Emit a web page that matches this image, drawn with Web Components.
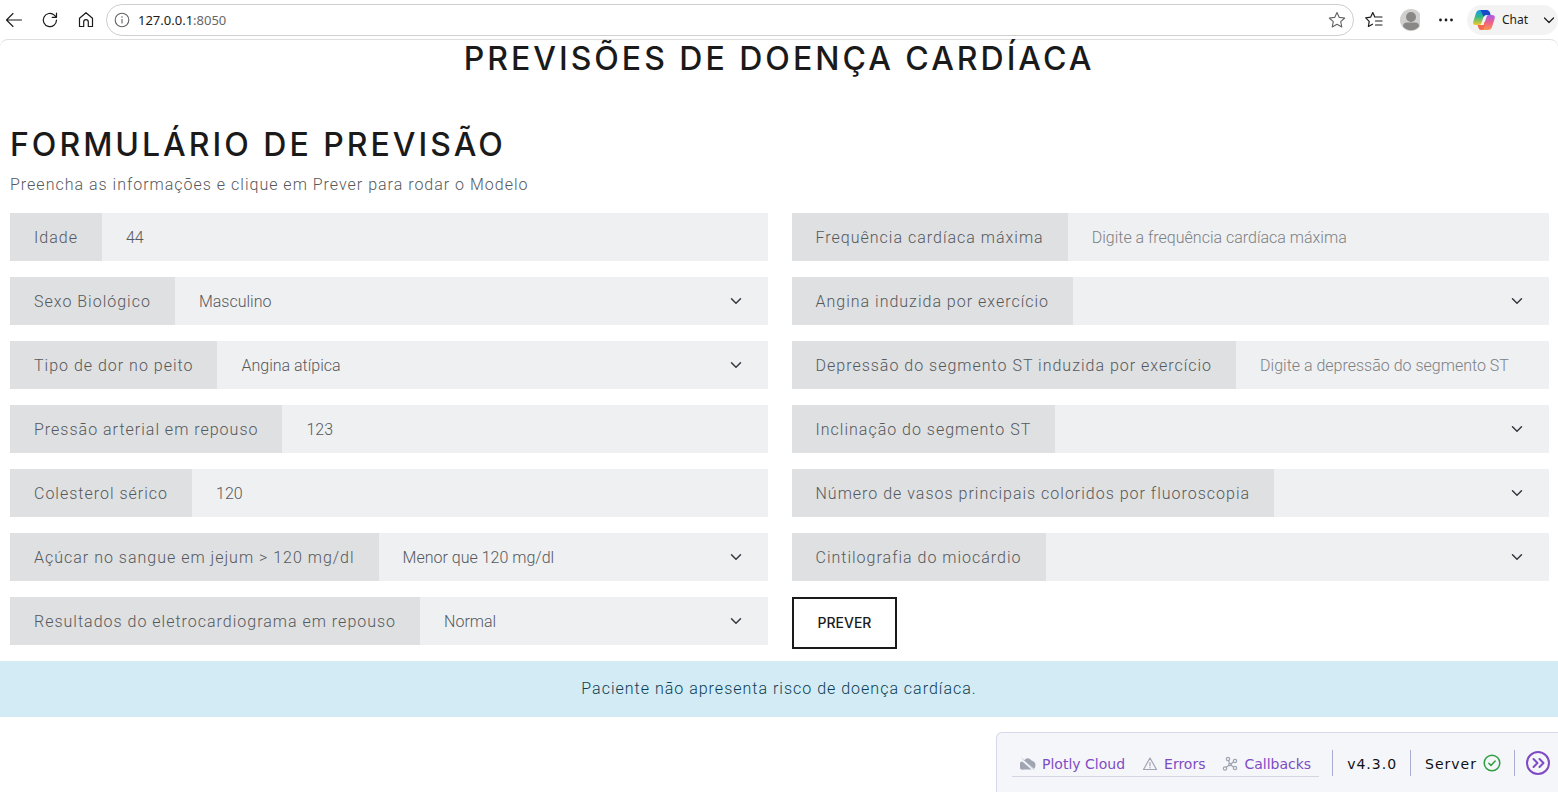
<!DOCTYPE html>
<html lang="pt-BR">
<head>
<meta charset="utf-8">
<meta name="viewport" content="width=device-width, initial-scale=1">
<title>Previsões de Doença Cardíaca</title>
<style>
  html, body { margin: 0; min-height: 100%; background: #fff; }
  body {
    --ink: #1a1a1a;
    --text: #55595c;
    --field: #eff0f2;
    --addon: #dfe0e2;
    --sans: Roboto, "Open Sans", sans-serif;
    --head: Inter, Lato, sans-serif;
    font: 300 16px/24px var(--sans);
    color: var(--text);
  }
</style>
</head>
<body>
<browser-bar host="127.0.0.1" port=":8050"></browser-bar>
<predict-page>
  <span slot="title">Previsões de Doença Cardíaca</span>
  <predict-form heading="Formulário de Previsão">
    <span slot="hint">Preencha as informações e clique em Prever para rodar o Modelo</span>
    <form-field slot="left" label="Idade" value="44"></form-field>
    <form-field slot="left" label="Sexo Biológico" options="Masculino|Feminino"></form-field>
    <form-field slot="left" label="Tipo de dor no peito" options="Angina atípica|Angina típica|Dor não anginosa|Assintomático"></form-field>
    <form-field slot="left" label="Pressão arterial em repouso" value="123"></form-field>
    <form-field slot="left" label="Colesterol sérico" value="120"></form-field>
    <form-field slot="left" label="Açúcar no sangue em jejum &gt; 120 mg/dl" options="Menor que 120 mg/dl|Maior que 120 mg/dl"></form-field>
    <form-field slot="left" label="Resultados do eletrocardiograma em repouso" options="Normal|Anormalidade"></form-field>
    <form-field slot="right" label="Frequência cardíaca máxima" placeholder="Digite a frequência cardíaca máxima"></form-field>
    <form-field slot="right" label="Angina induzida por exercício" options="|Não|Sim"></form-field>
    <form-field slot="right" label="Depressão do segmento ST induzida por exercício" placeholder="Digite a depressão do segmento ST"></form-field>
    <form-field slot="right" label="Inclinação do segmento ST" options="|1|2|3"></form-field>
    <form-field slot="right" label="Número de vasos principais coloridos por fluoroscopia" options="|0|1|2|3"></form-field>
    <form-field slot="right" label="Cintilografia do miocárdio" options="|Normal|Defeito fixo|Defeito reversível"></form-field>
    <outline-button slot="right">Prever</outline-button>
  </predict-form>
  <result-alert slot="result">Paciente não apresenta risco de doença cardíaca.</result-alert>
</predict-page>
<debug-menu></debug-menu>

<script>
function define(name, html, setup) {
  const tpl = document.createElement('template');
  tpl.innerHTML = html;
  customElements.define(name, class extends HTMLElement {
    constructor() {
      super();
      this.attachShadow({ mode: 'open' }).append(tpl.content.cloneNode(true));
    }
    connectedCallback() {
      if (setup && !this.ready) { this.ready = true; setup(this, this.shadowRoot); }
    }
  });
}

define('browser-bar', `
<style>
  :host { display: block; background: #fff; color: #1b1b1b; }
  .bar { display: flex; align-items: center; height: 39px; box-sizing: border-box; }
  button { border: 0; background: none; padding: 0; color: inherit; display: flex; align-items: center; justify-content: center; flex: none; }
  svg { display: block; fill: none; stroke: currentColor; stroke-linecap: round; stroke-linejoin: round; }
  svg.solid { stroke: none; fill: currentColor; }
  .nav { display: flex; gap: 16px; padding: 0 10px 0 4px; }
  .nav button { width: 20px; height: 20px; }
  .address { flex: 1; display: flex; align-items: center; gap: 8px; height: 32px; box-sizing: border-box; border: 1px solid #cfcfcf; border-radius: 16px; padding: 0 7px; min-width: 0; }
  .url { flex: 1; font: 400 13px/18px "Noto Sans", sans-serif; }
  .url span { color: #666; }
  .info, .star { color: #616161; }
  .tools { display: flex; align-items: center; gap: 16px; padding: 0 11px 0 10px; }
  .tools button { width: 20px; height: 22px; }
  .chat { height: 30px; border-radius: 15px; background: #f3f3f3; padding: 0 1px 0 5px; font: 400 12px/18px "Noto Sans", sans-serif; gap: 6px; }
  .chat span { margin-right: 7px; }
</style>
<div class="bar">
  <div class="nav">
    <button aria-label="Voltar"><svg width="20" height="20" stroke-width="1.1"><path d="M17.5 10H2.5M9 3.500L2.500 10L9 16.500"/></svg></button>
    <button aria-label="Atualizar"><svg width="20" height="20" stroke-width="1.2"><path d="M16.500 10A6.600 6.600 0 1 1 14.300 5.100L16.300 7.200M16.500 3V7.300H12.200"/></svg></button>
    <button aria-label="Início"><svg width="20" height="20" stroke-width="1.2"><path d="M3.500 8.200L10 2.700L16.500 8.200V16.500H12.300V12A2.300 2.300 0 0 0 7.700 12V16.500H3.500Z"/></svg></button>
  </div>
  <div class="address">
    <svg class="info" width="16" height="16" stroke-width="1.1"><circle cx="8" cy="8" r="6.800"/><path d="M8 7.500V11" /><path d="M8 5V5.100" stroke-width="1.500"/></svg>
    <div class="url"><b style="font-weight:400"></b><span></span></div>
    <svg class="star" width="18" height="18" stroke-width="1.1"><path d="M9 1.500L11.300 6.400L16.700 7L12.700 10.700L13.800 16L9 13.300L4.200 16L5.300 10.700L1.300 7L6.700 6.400Z"/></svg>
  </div>
  <div class="tools">
    <button aria-label="Favoritos"><svg width="20" height="20" stroke-width="1.200"><path d="M10.800 7L8.800 2.500L6.600 7.200L1.700 7.900L5.200 11.400L4.400 16.500L8.500 14.200M10.800 7H18M11.500 11H18M11.500 15H18"/></svg></button>
    <button aria-label="Perfil"><svg class="solid" width="22" height="22"><circle cx="11" cy="11" r="11" fill="#d2d0ce"/><circle cx="11" cy="8" r="5" fill="#8a8886"/><path d="M3 17.500Q3 13.500 7 13.500H15Q19 13.500 19 17.500Q16 21.200 11 21.200T3 17.500Z" fill="#8a8886"/></svg></button>
    <button aria-label="Mais"><svg class="solid" width="20" height="20"><circle cx="4.500" cy="10" r="1.400"/><circle cx="10" cy="10" r="1.400"/><circle cx="15.500" cy="10" r="1.400"/></svg></button>
  </div>
  <button class="chat">
    <svg class="solid" width="24" height="24" viewBox="0 0 24 24">
      <defs>
        <linearGradient id="a" x1="0" y1="0" x2="0" y2="1"><stop offset="0" stop-color="#1797e8"/><stop offset=".45" stop-color="#30b989"/><stop offset="1" stop-color="#f5ca26"/></linearGradient>
        <linearGradient id="b" x1="0" y1="0" x2="0" y2="1"><stop offset="0" stop-color="#a85cf0"/><stop offset=".5" stop-color="#ee608b"/><stop offset="1" stop-color="#fb944d"/></linearGradient>
      </defs>
      <path fill="url(#a)" d="M8 2H16L12.500 6L9.500 15Q9 17 7 17H3.500Q.500 17 1.300 13.500L4 5Q5 2 8 2Z"/>
      <path fill="#174bc8" d="M8.500 2H15Q17.200 2 18 4.500L18.600 7H14.500Q12.500 7 11.800 9Z"/>
      <path fill="url(#b)" d="M16.500 7H20Q23.500 7 22.700 10.500L20 19Q19 22 16 22H8L11.500 18L14.500 9Q15 7 16.500 7Z"/>
      <path fill="#f06a4f" d="M12.200 14.500L11.700 17L9.500 17H5.500L6.300 19.500Q7 22 9.200 22Q11.400 22 12 20L14 13Z"/>
    </svg>
    <span>Chat</span>
    <svg width="16" height="16" stroke-width="1.200"><path d="M3.500 6L8 10.500L12.500 6"/></svg>
  </button>
</div>`, (el, root) => {
  root.querySelector('.url b').textContent = el.getAttribute('host');
  root.querySelector('.url span').textContent = el.getAttribute('port');
});

define('predict-page', `
<style>
  :host { display: block; border-top: 1px solid #dedede; border-radius: 8px 8px 0 0; }
  h1 { margin: 0 0 48px; text-align: center; font: 500 32px/38px var(--head); letter-spacing: 3px; text-transform: uppercase; color: var(--ink); }
</style>
<main>
  <h1><slot name="title"></slot></h1>
  <slot></slot>
  <slot name="result"></slot>
</main>`);

define('predict-form', `
<style>
  :host { display: block; padding: 0 9px 0 10px; }
  h2 { margin: 0 0 8px; font: 500 32px/38px var(--head); letter-spacing: 3px; text-transform: uppercase; color: var(--ink); }
  p { margin: 0 0 16px; line-height: 25px; letter-spacing: 1px; }
  .columns { display: grid; grid-template-columns: 1fr 1fr; gap: 24px; }
  .column { display: flex; flex-direction: column; gap: 16px; min-width: 0; }
</style>
<h2></h2>
<p><slot name="hint"></slot></p>
<div class="columns">
  <div class="column"><slot name="left"></slot></div>
  <div class="column"><slot name="right"></slot></div>
</div>`, (el, root) => {
  root.querySelector('h2').textContent = el.getAttribute('heading');
});

define('form-field', `
<style>
  :host { display: flex; height: 48px; background: var(--field); }
  label { flex: none; padding: 13px 24px 11px; box-sizing: border-box; background: var(--addon); letter-spacing: 1px; white-space: nowrap; }
  .control { flex: 1; min-width: 0; display: grid; align-items: center; }
  input, select {
    grid-area: 1 / 1; width: 100%; height: 48px; box-sizing: border-box; margin: 0;
    border: 0; border-radius: 0; background: none; appearance: none;
    padding: 0 24px; font: inherit; color: inherit; outline: 0;
  }
  select { padding-top: 2px; }
  input::placeholder { color: #7c8083; opacity: 1; }
  svg { grid-area: 1 / 1; justify-self: end; margin-right: 26px; pointer-events: none; }
</style>
<label for="control"></label>
<div class="control"></div>`, (el, root) => {
  root.querySelector('label').textContent = el.getAttribute('label');
  const box = root.querySelector('.control');
  const options = el.getAttribute('options');
  const control = document.createElement(options === null ? 'input' : 'select');
  control.id = 'control';
  box.append(control);
  if (options === null) {
    control.value = el.getAttribute('value') || '';
    control.placeholder = el.getAttribute('placeholder') || '';
  } else {
    options.split('|').forEach(text => control.add(new Option(text)));
    box.insertAdjacentHTML('beforeend', '<svg width="12" height="12" viewBox="0 0 16 16" fill="none" stroke="#343a40" stroke-width="2" stroke-linecap="round" stroke-linejoin="round"><path d="m2 5 6 6 6-6"/></svg>');
  }
});

define('outline-button', `
<style>
  :host { display: block; }
  button { display: block; height: 52px; padding: 0 24px; border: 2px solid var(--ink); border-radius: 0; background: #fff; color: var(--ink); font: 500 14px/20px var(--head); text-transform: uppercase; }
</style>
<button type="button"><slot></slot></button>`);

define('result-alert', `
<style>
  :host { display: block; margin-top: 12px; padding: 16px; background: #d2ebf5; color: #0c3e53; text-align: center; letter-spacing: 1px; }
</style>
<div role="alert"><slot></slot></div>`);

define('debug-menu', `
<style>
  :host { position: fixed; right: 0; bottom: 0; display: flex; align-items: center; box-sizing: border-box; height: 60px; padding: 0 8px 0 15px; background: #f5f6fa; border: solid #d6d9ea; border-width: 1px 0 0 1px; border-radius: 6px 0 0 0; font: 400 14px/20px "DejaVu Sans", sans-serif; color: #111; }
  svg { display: block; flex: none; fill: none; stroke: currentColor; stroke-linecap: round; stroke-linejoin: round; }
  svg.solid { stroke: none; fill: currentColor; }
  button { border: 0; background: none; padding: 2px 8px 0; display: flex; align-items: center; gap: 6px; height: 26px; box-sizing: border-box; font: inherit; color: #7f4bc4; }
  button svg { color: #a0a5b2; }
  .links { display: flex; padding-top: 2px; border-bottom: 1px solid #d3d5e0; margin-right: 13px; }
  .links button + button { padding-left: 9px; }
  .cell { display: flex; align-items: center; gap: 6px; height: 26px; box-sizing: border-box; padding: 2px 13px 0 14px; border-left: 1px solid #a9aed0; letter-spacing: 1px; }
  .server svg { color: #2f9e41; margin-top: -2px; }
  .toggle { border-left: 1px solid #a9aed0; padding: 0 0 0 11px; }
  .toggle svg { color: #7f4bc4; }
</style>
<div class="links">
  <button><svg class="solid" width="16" height="16"><path d="M2.300 5.500L11.500 13.500H4A3.800 3.800 0 0 1 2.300 5.500ZM5 3.500Q8.500 .800 11.500 4.500Q15.700 5.500 15.500 9.500Q15.300 11.800 14 12.800L4.200 4.200Z"/><path d="M2 2.500L14 13.500" stroke="#a0a5b2" stroke-width=".5"/></svg>Plotly Cloud</button>
  <button><svg width="16" height="16" stroke-width="1.200"><path d="M8 2L14.500 13.500H1.500ZM8 6.500V10M8 11.700V11.800"/></svg>Errors</button>
  <button><svg width="16" height="16" stroke-width="1.200"><circle cx="6" cy="3" r="1.700"/><circle cx="13" cy="5" r="1.700"/><circle cx="13" cy="12" r="1.700"/><circle cx="3" cy="12.500" r="1.700"/><circle cx="8" cy="8.500" r="1.200"/><path d="M6.500 4.700L7.500 7.300M9 8L11.500 5.800M9 9.200L11.500 11M7 9.300L4.300 11.300"/></svg>Callbacks</button>
</div>
<div class="cell">v4.3.0</div>
<div class="cell server">Server<svg width="18" height="18" stroke-width="1.500"><circle cx="9" cy="9" r="7.800"/><path d="M5.800 9.200L8 11.400L12.200 7"/></svg></div>
<button class="toggle" aria-label="Recolher"><svg width="24" height="24" stroke-width="2"><circle cx="12" cy="12" r="11"/><path d="M7.500 8L11.500 12L7.500 16M13.500 8L17.500 12L13.500 16"/></svg></button>`);
</script>
</body>
</html>
